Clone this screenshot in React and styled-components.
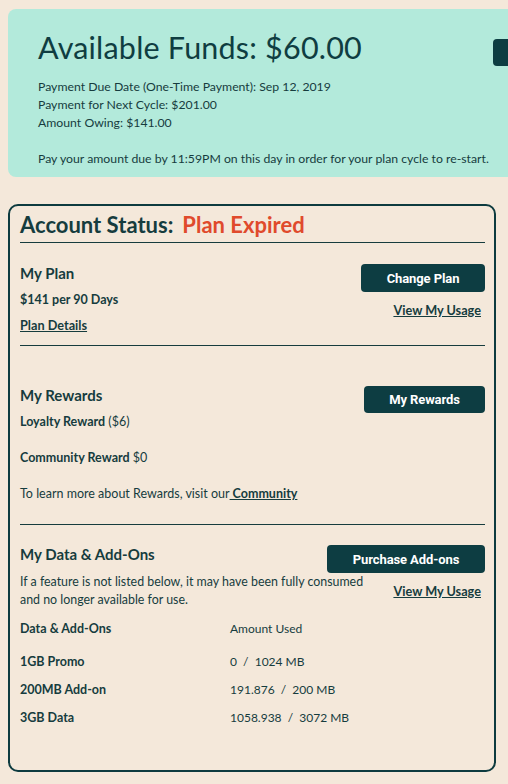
import React from "react";
import styled, { createGlobalStyle } from "styled-components";

const Global = createGlobalStyle`
  html, body { margin: 0; padding: 0; background: #f4e8da; }
  body { font-family: "Lato", "Noto Sans", sans-serif; color: #163c3e; }
  * { box-sizing: border-box; }
`;

const Page = styled.div`
  width: 508px;
  min-height: 784px;
  overflow: hidden;
  padding: 9px 0 0 8px;
`;

const FundsCard = styled.section`
  width: 620px;
  background: #b3eadb;
  border-radius: 8px;
  padding: 19px 0 9px 30px;
  display: grid;
  grid-template-columns: 455px auto;
  align-items: start;
`;

const FundsTitle = styled.h1`
  margin: 0 0 12px;
  font-size: 30.5px;
  font-weight: 400;
  line-height: 38px;
  color: #0f3d41;
  letter-spacing: 0.2px;
`;

const InfoLine = styled.p`
  margin: ${(p) => (p.$gap ? "18px" : "0")} 0 0;
  font-size: 12.25px;
  line-height: 18px;
`;

const DarkButton = styled.button`
  border: none;
  border-radius: 4px;
  background: #0d3d42;
  color: #fff;
  font-family: "Roboto", "Liberation Sans", sans-serif;
  font-weight: 700;
  font-size: 13px;
  letter-spacing: -0.1px;
  height: ${(p) => p.$h || 28}px;
  width: ${(p) => p.$w}px;
  padding: 0;
  cursor: pointer;
`;

const TopButton = styled(DarkButton)`
  margin-top: 11px;
`;

const AccountCard = styled.section`
  width: 488px;
  margin-top: 27px;
  border: 2px solid #0d3b3f;
  border-radius: 10px;
  padding: 6px 9px 43px 10px;
`;

const Header = styled.h2`
  margin: 0;
  font-size: 22px;
  font-weight: 700;
  line-height: 26px;
  padding-bottom: 4px;
  border-bottom: 1px solid #163c3e;
`;

const Expired = styled.span`
  color: #e04a2c;
  margin-left: 9px;
`;

const Section = styled.div`
  padding: ${(p) => p.$pad};
  border-bottom: ${(p) => (p.$line ? "1px solid #163c3e" : "none")};
`;

const Row = styled.div`
  display: flex;
  justify-content: space-between;
  align-items: ${(p) => p.$align || "flex-start"};
  margin-top: ${(p) => p.$mt || 0}px;
`;

const Col = styled.div`
  display: flex;
  flex-direction: column;
  align-items: ${(p) => (p.$right ? "flex-end" : "flex-start")};
`;

const Title = styled.h3`
  margin: 0;
  font-size: 15px;
  font-weight: 700;
  line-height: 18px;
`;

const Text = styled.p`
  margin: ${(p) => p.$mt || 0}px 0 0;
  font-size: 12.5px;
  line-height: 18px;
  font-weight: ${(p) => (p.$bold ? 700 : 400)};
`;

const Bold = styled.b`
  font-weight: 700;
`;

const LinkText = styled.a`
  display: block;
  margin-top: ${(p) => p.$mt || 0}px;
  margin-right: ${(p) => p.$mr || 0}px;
  font-size: 12.7px;
  line-height: 18px;
  font-weight: 700;
  color: #163c3e;
  text-decoration: underline;
  cursor: pointer;
`;

const InlineLink = styled.a`
  font-weight: 700;
  color: #163c3e;
  text-decoration: underline;
`;

const Desc = styled.p`
  margin: 0;
  font-size: 12.4px;
  line-height: 18px;
  width: 350px;
`;

const Table = styled.div`
  margin-top: 11px;
  display: grid;
  grid-template-columns: 210px 1fr;
  row-gap: 10px;
  font-size: 12px;
  line-height: 18px;
`;

const Cell = styled.div`
  font-weight: ${(p) => (p.$bold ? 700 : 400)};
  font-size: ${(p) => (p.$bold ? "12.5px" : "12px")};
  white-space: pre;
  margin-bottom: ${(p) => (p.$head ? 5 : 0)}px;
`;

const rows = [
  ["1GB Promo", "0  /  1024 MB"],
  ["200MB Add-on", "191.876  /  200 MB"],
  ["3GB Data", "1058.938  /  3072 MB"],
];

export default function App() {
  return (
    <>
      <Global />
      <Page>
        <FundsCard>
          <div>
            <FundsTitle>Available Funds: $60.00</FundsTitle>
            <InfoLine>Payment Due Date (One-Time Payment): Sep 12, 2019</InfoLine>
            <InfoLine>Payment for Next Cycle: $201.00</InfoLine>
            <InfoLine>Amount Owing: $141.00</InfoLine>
            <InfoLine $gap>
              Pay your amount due by 11:59PM on this day in order for your plan cycle to re-start.
            </InfoLine>
          </div>
          <TopButton $w={110} $h={27} aria-label="Make a Payment" />
        </FundsCard>

        <AccountCard>
          <Header>
            Account Status:<Expired>Plan Expired</Expired>
          </Header>

          <Section $pad="21px 0 11px" $line>
            <Row>
              <Col>
                <Title>My Plan</Title>
                <Text $bold $mt={9}>$141 per 90 Days</Text>
                <LinkText $mt={7}>Plan Details</LinkText>
              </Col>
              <Col $right>
                <DarkButton $w={124}>Change Plan</DarkButton>
                <LinkText $mt={9} $mr={4}>View My Usage</LinkText>
              </Col>
            </Row>
          </Section>

          <Section $pad="40px 0 21px" $line>
            <Row>
              <Col>
                <Title>My Rewards</Title>
                <Text $mt={9}><Bold>Loyalty Reward</Bold> ($6)</Text>
                <Text $mt={18}><Bold>Community Reward</Bold> $0</Text>
                <Text $mt={18}>
                  To learn more about Rewards, visit our<InlineLink> Community</InlineLink>
                </Text>
              </Col>
              <DarkButton $w={121} $h={27}>My Rewards</DarkButton>
            </Row>
          </Section>

          <Section $pad="20px 0 0">
            <Row>
              <Title>My Data &amp; Add-Ons</Title>
              <DarkButton $w={158}>Purchase Add-ons</DarkButton>
            </Row>
            <Row $align="center">
              <Desc>
                If a feature is not listed below, it may have been fully consumed and no longer available for use.
              </Desc>
              <LinkText $mr={4}>View My Usage</LinkText>
            </Row>
            <Table>
              <Cell $bold $head>Data &amp; Add-Ons</Cell>
              <Cell $head>Amount Used</Cell>
              {rows.map(([n, v]) => (
                <React.Fragment key={n}>
                  <Cell $bold>{n}</Cell>
                  <Cell>{v}</Cell>
                </React.Fragment>
              ))}
            </Table>
          </Section>
        </AccountCard>
      </Page>
    </>
  );
}
